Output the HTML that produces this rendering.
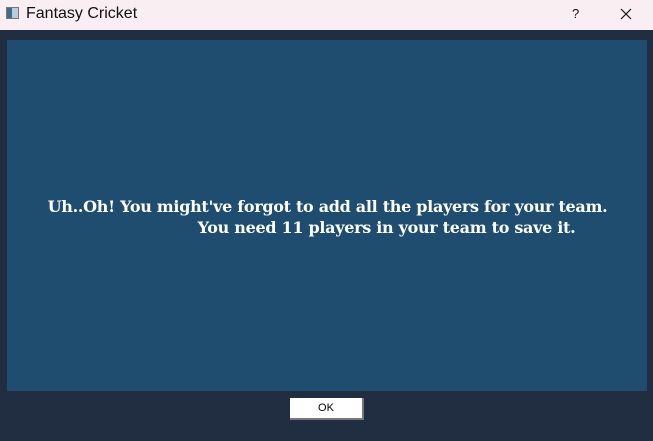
<!DOCTYPE html>
<html><head><meta charset="utf-8"><style>
html,body{margin:0;padding:0;width:653px;height:441px;overflow:hidden;background:#212d40;font-family:"Liberation Sans",sans-serif}
#tb{position:absolute;left:0;top:0;width:653px;height:30px;background:#f9eef2}
#ic{position:absolute;left:6px;top:7px;width:13px;height:12px;border:1px solid #777;background:linear-gradient(90deg,#3a6f8f 0 45%,#bcd 45%);box-sizing:border-box}
#title{position:absolute;left:26px;top:5px;font-size:16px;color:#111}
#q{position:absolute;left:572px;top:6px;font-size:13px;color:#111}
#x{position:absolute;left:620px;top:8px}
#panel{position:absolute;left:7px;top:40px;width:640px;height:351px;background:#1e4d6f}
.t{position:absolute;color:#fff;font-family:"DejaVu Serif","Liberation Serif",serif;font-weight:bold;font-size:16px;white-space:nowrap;letter-spacing:-0.3px}
#ok{position:absolute;left:290px;top:398px;width:74px;height:22px;background:#fff;border-right:2px solid #777;border-bottom:2px solid #777;box-sizing:border-box;font-size:11px;text-align:center;line-height:20px;color:#000}
</style></head><body>
<div id="tb"><div id="ic"></div><div id="title">Fantasy Cricket</div><div id="q">?</div>
<svg id="x" width="12" height="12" viewBox="0 0 12 12"><path d="M1 1L11 11M11 1L1 11" stroke="#111" stroke-width="1.2"/></svg></div>
<div id="panel"></div>
<div class="t" style="left:45px;top:197px;width:565px;text-align:center">Uh..Oh! You might've forgot to add all the players for your team.</div>
<div class="t" style="left:194px;top:218px;width:385px;text-align:center">You need 11 players in your team to save it.</div>
<div id="ok">OK</div>
</body></html>
